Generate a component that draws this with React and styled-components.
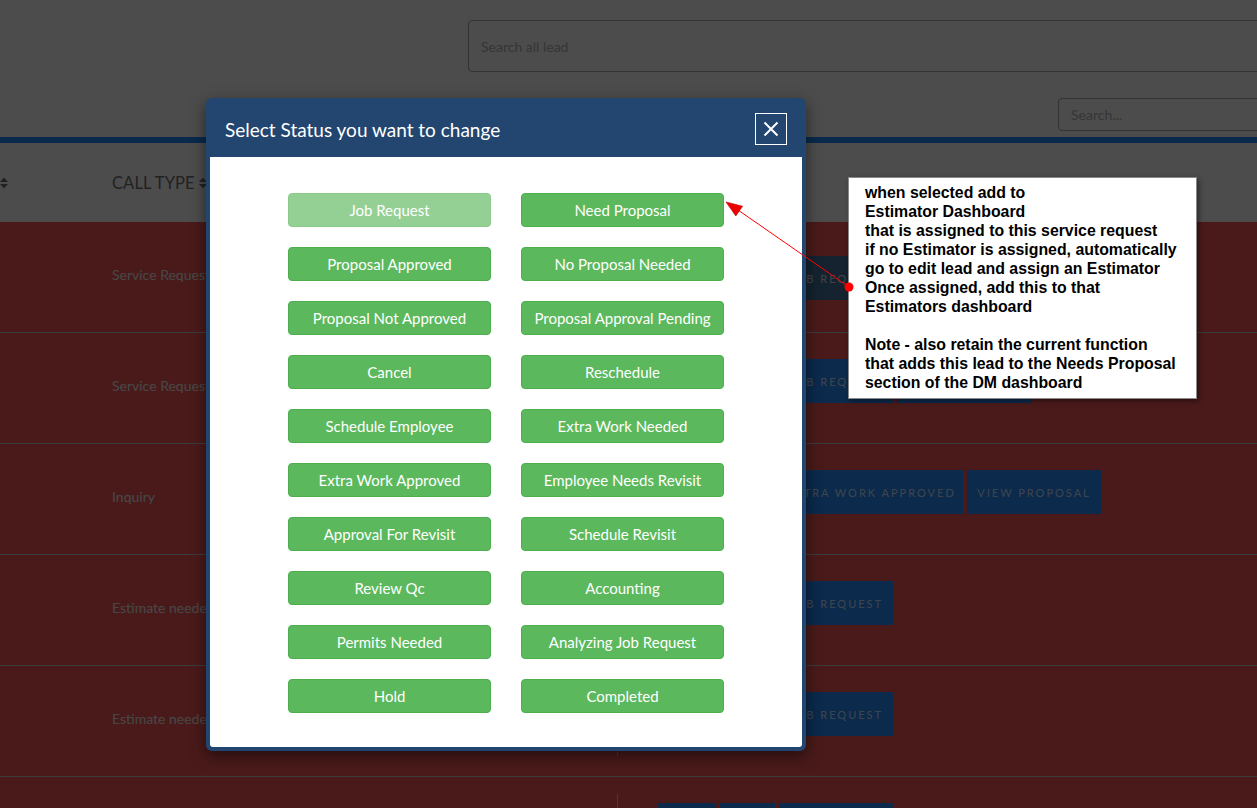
import React from "react";
import styled, { createGlobalStyle } from "styled-components";

const GlobalStyle = createGlobalStyle`
  html, body {
    margin: 0;
    padding: 0;
    width: 100%;
    height: 100%;
    overflow: hidden;
  }
  body {
    font-family: Lato, "Open Sans", sans-serif;
    background: #fff;
  }
  * {
    box-sizing: border-box;
  }
`;

const statuses = [
  "Job Request",
  "Need Proposal",
  "Proposal Approved",
  "No Proposal Needed",
  "Proposal Not Approved",
  "Proposal Approval Pending",
  "Cancel",
  "Reschedule",
  "Schedule Employee",
  "Extra Work Needed",
  "Extra Work Approved",
  "Employee Needs Revisit",
  "Approval For Revisit",
  "Schedule Revisit",
  "Review Qc",
  "Accounting",
  "Permits Needed",
  "Analyzing Job Request",
  "Hold",
  "Completed",
];

const leads = [
  {
    type: "Service Request",
    top: 34,
    actions: [
      { label: "View", w: 58 },
      { label: "Edit", w: 55 },
      { label: "Job Request", w: 114, dark: true },
    ],
  },
  {
    type: "Service Request",
    actions: [
      { label: "View", w: 58 },
      { label: "Edit", w: 55 },
      { label: "Job Request", w: 114 },
      { label: "View Proposal", w: 134 },
    ],
  },
  {
    type: "Inquiry",
    actions: [
      { label: "View", w: 58 },
      { label: "Edit", w: 55 },
      { label: "Extra Work Approved", w: 184 },
      { label: "View Proposal", w: 134 },
    ],
  },
  {
    type: "Estimate needed",
    actions: [
      { label: "View", w: 58 },
      { label: "Edit", w: 55 },
      { label: "Job Request", w: 114 },
    ],
  },
  {
    type: "Estimate needed",
    actions: [
      { label: "View", w: 58 },
      { label: "Edit", w: 55 },
      { label: "Job Request", w: 114 },
    ],
  },
  {
    type: "Service Request",
    actions: [
      { label: "View", w: 58 },
      { label: "Edit", w: 55 },
      { label: "Job Request", w: 114 },
    ],
  },
];

const noteLines = [
  "when selected add to",
  "Estimator Dashboard",
  "that is assigned to this service request",
  "if no Estimator is assigned, automatically",
  "go to edit lead and assign an Estimator",
  "Once assigned, add this to that",
  "Estimators dashboard",
  "",
  "Note - also retain the current function",
  "that adds this lead to the Needs Proposal",
  "section of the DM dashboard",
];

const SortIcon = () => (
  <SortGlyph viewBox="0 0 8 14" width="8" height="14">
    <path d="M0 6 L4 1.5 L8 6 Z" fill="currentColor" />
    <path d="M0 8 L4 12.5 L8 8 Z" fill="currentColor" />
  </SortGlyph>
);

const App = () => {
  return (
    <Page>
      <GlobalStyle />

      <TopBar>
        <LeadSearch placeholder="Search all lead" />
      </TopBar>

      <FilterBar>
        <TableSearch placeholder="Search..." />
      </FilterBar>

      <Table>
        <HeadRow>
          <HeadCell>
            <SortIcon />
          </HeadCell>
          <HeadCell>
            CALL TYPE <SortIcon />
          </HeadCell>
          <HeadCell />
        </HeadRow>

        {leads.map((lead, i) => (
          <LeadRow key={i}>
            <Cell />
            <TypeCell>{lead.type}</TypeCell>
            <ActionsCell>
              <ActionsInner $top={lead.top}>
                {lead.actions.map((a, j) => (
                  <ActionButton key={j} $dark={a.dark} style={{ width: a.w }}>
                    {a.label}
                  </ActionButton>
                ))}
              </ActionsInner>
            </ActionsCell>
          </LeadRow>
        ))}
      </Table>

      <Backdrop />

      <Modal>
        <ModalHeader>
          <ModalTitle>Select Status you want to change</ModalTitle>
          <CloseButton aria-label="close">
            <svg viewBox="0 0 16 16" width="16" height="16">
              <path
                d="M1.5 1.5 L14.5 14.5 M14.5 1.5 L1.5 14.5"
                stroke="#fff"
                strokeWidth="2"
                fill="none"
              />
            </svg>
          </CloseButton>
        </ModalHeader>
        <ModalBody>
          {statuses.map((s, i) => (
            <StatusButton key={s} disabled={i === 0}>
              {s}
            </StatusButton>
          ))}
        </ModalBody>
      </Modal>

      <Note>
        {noteLines.map((line, i) => (
          <NoteLine key={i}>{line || "\u00a0"}</NoteLine>
        ))}
      </Note>

      <Pointer viewBox="0 0 1257 808" width="1257" height="808">
        <line x1="738" y1="210" x2="849" y2="287" stroke="#f00" strokeWidth="1" />
        <polygon points="726,202 742.6,206.2 735.8,216" fill="#e00" stroke="#b00" strokeWidth="0.6" />
        <circle cx="849" cy="287" r="4.5" fill="#f00" />
      </Pointer>
    </Page>
  );
};

export default App;

const Page = styled.div`
  position: relative;
  width: 1257px;
  height: 808px;
  overflow: hidden;
  background: #fff;
`;

const TopBar = styled.div`
  height: 98px;
  padding: 20px 0 0 468px;
`;

const LeadSearch = styled.input`
  width: 900px;
  height: 52px;
  border: 1px solid #aaa;
  border-radius: 4px;
  padding: 0 12px;
  font-family: Lato, sans-serif;
  font-size: 14px;
  outline: none;

  &::placeholder {
    color: #b4b4b4;
  }
`;

const FilterBar = styled.div`
  height: 39px;
  padding-left: 1058px;
`;

const TableSearch = styled.input`
  width: 300px;
  height: 33px;
  border: 1px solid #aaa;
  border-radius: 4px;
  padding: 0 12px;
  font-family: Lato, sans-serif;
  font-size: 14px;
  outline: none;

  &::placeholder {
    color: #b4b4b4;
  }
`;

const Table = styled.div`
  border-top: 6px solid #1f8cff;
`;

const HeadRow = styled.div`
  display: grid;
  grid-template-columns: 112px 505px 1fr;
  height: 79px;
  align-items: center;
`;

const HeadCell = styled.div`
  display: flex;
  align-items: center;
  gap: 4px;
  font-size: 16.5px;
  color: #707070;
  letter-spacing: 0.1px;
`;

const SortGlyph = styled.svg`
  color: #707070;
`;

const LeadRow = styled.div`
  display: grid;
  grid-template-columns: 112px 505px 1fr;
  height: 111px;
  background: #f75757;
  border-bottom: 1px solid #c8c8c8;
`;

const Cell = styled.div``;

const TypeCell = styled.div`
  display: flex;
  align-items: center;
  padding-bottom: 6px;
  font-size: 14px;
  color: #eee;
`;

const ActionsCell = styled.div`
  padding: 17px 0 20px;
`;

const ActionsInner = styled.div`
  display: flex;
  gap: 4px;
  height: 100%;
  border-left: 1px solid #c8c8c8;
  padding: ${(p) => (p.$top ? p.$top - 17 : 9)}px 0 0 40px;
`;

const ActionButton = styled.div`
  display: flex;
  align-items: center;
  justify-content: center;
  height: 44px;
  flex-shrink: 0;
  background: ${(p) => (p.$dark ? "#43759d" : "#258cfd")};
  color: rgba(255, 255, 255, 0.8);
  font-size: 11px;
  letter-spacing: 2px;
  text-transform: uppercase;
  white-space: nowrap;
`;

const Backdrop = styled.div`
  position: absolute;
  inset: 0;
  background: rgba(0, 0, 0, 0.7);
`;

const Modal = styled.div`
  position: absolute;
  left: 206px;
  top: 98px;
  width: 600px;
  background: #22466f;
  border-radius: 6px;
  padding: 0 4px 4px;
  box-shadow: 0 5px 15px rgba(0, 0, 0, 0.5);
`;

const ModalHeader = styled.div`
  display: flex;
  align-items: center;
  justify-content: space-between;
  height: 59px;
  padding: 3px 15px 0;
`;

const ModalTitle = styled.h4`
  margin: 0;
  font-weight: 400;
  font-size: 19px;
  color: #fff;
`;

const CloseButton = styled.button`
  display: flex;
  align-items: center;
  justify-content: center;
  width: 32px;
  height: 32px;
  padding: 0;
  background: transparent;
  border: 1px solid #fff;
  cursor: pointer;
`;

const ModalBody = styled.div`
  display: grid;
  grid-template-columns: 203px 203px;
  justify-content: center;
  column-gap: 30px;
  row-gap: 20px;
  padding: 36px 0 34px;
  background: #fff;
  border-radius: 0 0 3px 3px;
`;

const StatusButton = styled.button`
  height: 34px;
  padding: 0 0 1px;
  background: #5cb85c;
  border: 1px solid #4cae4c;
  border-radius: 4px;
  color: #fff;
  font-family: Lato, sans-serif;
  font-size: 15px;
  cursor: pointer;

  &:disabled {
    opacity: 0.65;
    cursor: not-allowed;
  }
`;

const Note = styled.div`
  position: absolute;
  left: 848px;
  top: 177px;
  width: 349px;
  padding: 5px 0 6px 16px;
  background: #fff;
  border: 1px solid #8a8a8a;
  box-shadow: 2px 2px 5px rgba(0, 0, 0, 0.45);
  font-family: "Liberation Sans", Arial, sans-serif;
  font-weight: 700;
  font-size: 15.85px;
  line-height: 19px;
  color: #000;
`;

const NoteLine = styled.div`
  white-space: nowrap;
`;

const Pointer = styled.svg`
  position: absolute;
  left: 0;
  top: 0;
  pointer-events: none;
`;
